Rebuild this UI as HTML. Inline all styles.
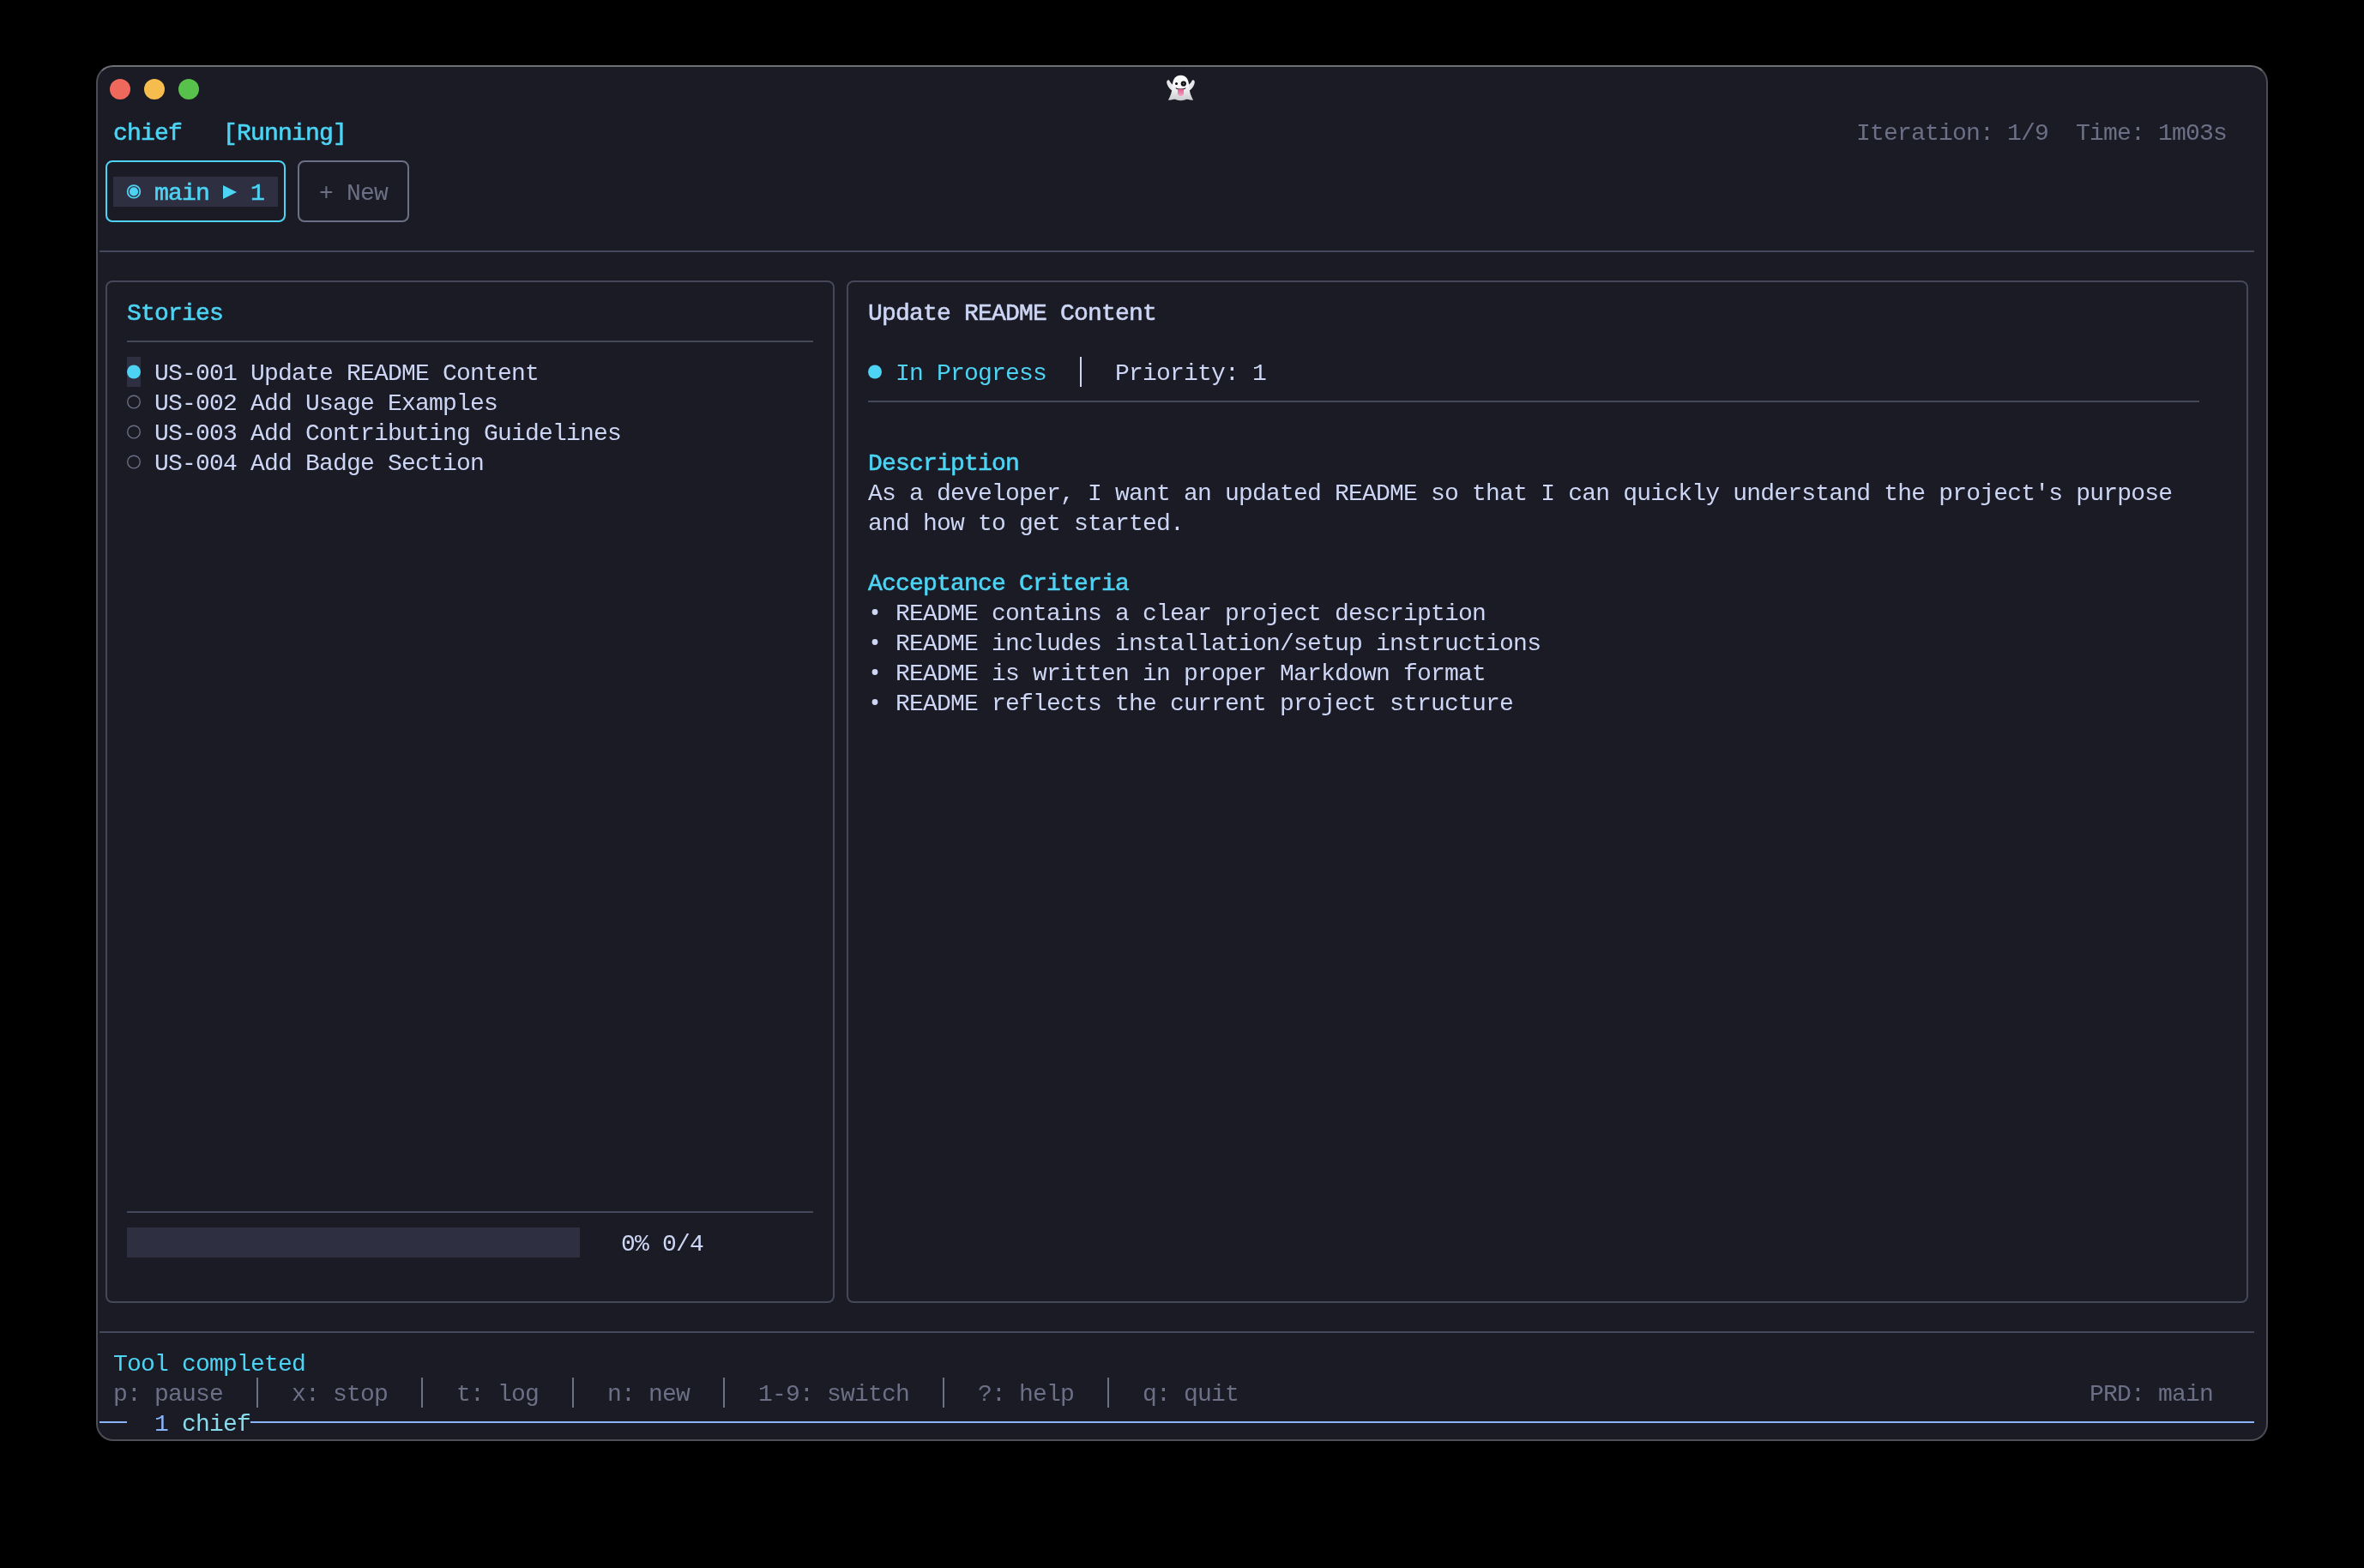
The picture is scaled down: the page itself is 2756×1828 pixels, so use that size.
<!DOCTYPE html>
<html><head><meta charset="utf-8">
<style>
html,body{margin:0;padding:0;background:#000;width:2756px;height:1828px;overflow:hidden}
.win{position:absolute;left:112px;top:76px;width:2532px;height:1604px;box-sizing:border-box;background:#1b1b25;border:2px solid #4c4c55;border-top-color:#707077;border-bottom-color:#4e4e56;border-radius:20px}
.a{position:absolute}
.t{position:absolute;white-space:pre;font-family:"Liberation Mono",monospace;font-size:28px;line-height:35px;letter-spacing:-0.800px;will-change:transform}
.tl{position:absolute;width:24.5px;height:24.5px;border-radius:50%}
svg{position:absolute;left:0;top:0}
</style></head><body>
<div class="win"></div>
<div class="tl" style="left:127.75px;top:91.75px;background:#ef685c"></div>
<div class="tl" style="left:167.75px;top:91.75px;background:#f6bc4d"></div>
<div class="tl" style="left:207.75px;top:91.75px;background:#58c14c"></div>
<div class="t" style="left:132px;top:137.8px;color:#4dd4f4;font-weight:400;-webkit-text-stroke:0.6px currentColor;">chief</div><div class="t" style="left:260px;top:137.8px;color:#4dd4f4;font-weight:400;-webkit-text-stroke:0.6px currentColor;">[Running]</div><div class="t" style="left:2164px;top:137.8px;color:#6c7086;">Iteration: 1/9  Time: 1m03s</div><div class="a" style="left:123px;top:187px;width:210px;height:72px;border:2px solid #4dd4f4;border-radius:8px;box-sizing:border-box"></div><div class="a" style="left:132px;top:206px;width:192px;height:35px;background:#2e3041;"></div><div class="t" style="left:180px;top:207.8px;color:#4dd4f4;font-weight:400;-webkit-text-stroke:0.6px currentColor;">main</div><div class="t" style="left:292px;top:207.8px;color:#4dd4f4;font-weight:400;-webkit-text-stroke:0.6px currentColor;">1</div><div class="a" style="left:347px;top:187px;width:130px;height:72px;border:2px solid #6c7086;border-radius:8px;box-sizing:border-box"></div><div class="t" style="left:372px;top:207.8px;color:#6c7086;">+</div><div class="t" style="left:404px;top:207.8px;color:#6c7086;">New</div><div class="a" style="left:116px;top:292px;width:2512px;height:2px;background:#45475a;"></div><div class="a" style="left:123px;top:327px;width:850px;height:1192px;border:2px solid #45475a;border-radius:8px;box-sizing:border-box"></div><div class="a" style="left:987px;top:327px;width:1634px;height:1192px;border:2px solid #45475a;border-radius:8px;box-sizing:border-box"></div><div class="t" style="left:148px;top:347.8px;color:#4dd4f4;font-weight:400;-webkit-text-stroke:0.6px currentColor;">Stories</div><div class="a" style="left:148px;top:397px;width:800px;height:2px;background:#45475a;"></div><div class="a" style="left:148px;top:416px;width:16px;height:35px;background:#2e3041;"></div><div class="t" style="left:180px;top:417.8px;color:#cdd6f4;">US-001 Update README Content</div><div class="t" style="left:180px;top:452.8px;color:#cdd6f4;">US-002 Add Usage Examples</div><div class="t" style="left:180px;top:487.8px;color:#cdd6f4;">US-003 Add Contributing Guidelines</div><div class="t" style="left:180px;top:522.8px;color:#cdd6f4;">US-004 Add Badge Section</div><div class="a" style="left:148px;top:1412px;width:800px;height:2px;background:#45475a;"></div><div class="a" style="left:148px;top:1431px;width:528px;height:35px;background:#2e3041;"></div><div class="t" style="left:724px;top:1432.8px;color:#cdd6f4;">0% 0/4</div><div class="t" style="left:1012px;top:347.8px;color:#cdd6f4;font-weight:400;-webkit-text-stroke:0.6px currentColor;">Update README Content</div><div class="t" style="left:1044px;top:417.8px;color:#4dd4f4;">In Progress</div><div class="a" style="left:1259px;top:416px;width:2px;height:35px;background:#cdd6f4;"></div><div class="t" style="left:1300px;top:417.8px;color:#cdd6f4;">Priority: 1</div><div class="a" style="left:1012px;top:467px;width:1552px;height:2px;background:#45475a;"></div><div class="t" style="left:1012px;top:522.8px;color:#4dd4f4;font-weight:400;-webkit-text-stroke:0.6px currentColor;">Description</div><div class="t" style="left:1012px;top:557.8px;color:#cdd6f4;">As a developer, I want an updated README so that I can quickly understand the project's purpose</div><div class="t" style="left:1012px;top:592.8px;color:#cdd6f4;">and how to get started.</div><div class="t" style="left:1012px;top:662.8px;color:#4dd4f4;font-weight:400;-webkit-text-stroke:0.6px currentColor;">Acceptance Criteria</div><div class="t" style="left:1044px;top:697.8px;color:#cdd6f4;">README contains a clear project description</div><div class="t" style="left:1044px;top:732.8px;color:#cdd6f4;">README includes installation/setup instructions</div><div class="t" style="left:1044px;top:767.8px;color:#cdd6f4;">README is written in proper Markdown format</div><div class="t" style="left:1044px;top:802.8px;color:#cdd6f4;">README reflects the current project structure</div><div class="a" style="left:116px;top:1552px;width:2512px;height:2px;background:#45475a;"></div><div class="t" style="left:132px;top:1572.8px;color:#4dd4f4;">Tool completed</div><div class="t" style="left:132px;top:1607.8px;color:#6c7086;">p: pause</div><div class="t" style="left:340px;top:1607.8px;color:#6c7086;">x: stop</div><div class="t" style="left:532px;top:1607.8px;color:#6c7086;">t: log</div><div class="t" style="left:708px;top:1607.8px;color:#6c7086;">n: new</div><div class="t" style="left:884px;top:1607.8px;color:#6c7086;">1-9: switch</div><div class="t" style="left:1140px;top:1607.8px;color:#6c7086;">?: help</div><div class="t" style="left:1332px;top:1607.8px;color:#6c7086;">q: quit</div><div class="t" style="left:2436px;top:1607.8px;color:#6c7086;">PRD: main</div><div class="a" style="left:299px;top:1606px;width:2px;height:35px;background:#6c7086;"></div><div class="a" style="left:491px;top:1606px;width:2px;height:35px;background:#6c7086;"></div><div class="a" style="left:667px;top:1606px;width:2px;height:35px;background:#6c7086;"></div><div class="a" style="left:843px;top:1606px;width:2px;height:35px;background:#6c7086;"></div><div class="a" style="left:1099px;top:1606px;width:2px;height:35px;background:#6c7086;"></div><div class="a" style="left:1291px;top:1606px;width:2px;height:35px;background:#6c7086;"></div><div class="a" style="left:116px;top:1657px;width:32px;height:2px;background:#89b4fa;"></div><div class="a" style="left:292px;top:1657px;width:2336px;height:2px;background:#89b4fa;"></div><div class="t" style="left:180px;top:1642.8px;color:#89b4fa;">1</div><div class="t" style="left:212px;top:1642.8px;color:#89dceb;">chief</div>
<svg width="2756" height="1828" viewBox="0 0 2756 1828"><circle cx="156" cy="223.4" r="7.3" fill="none" stroke="#4dd4f4" stroke-width="1.8"/><circle cx="156" cy="223.4" r="5.1" fill="#4dd4f4"/><path d="M260 216 L276 224 L260 232 Z" fill="#4dd4f4"/><circle cx="156" cy="433.5" r="8" fill="#4dd4f4"/><circle cx="156" cy="468.5" r="7.3" fill="none" stroke="#6c7086" stroke-width="1.35"/><circle cx="156" cy="503.5" r="7.3" fill="none" stroke="#6c7086" stroke-width="1.35"/><circle cx="156" cy="538.5" r="7.3" fill="none" stroke="#6c7086" stroke-width="1.35"/><circle cx="1020" cy="433.5" r="8" fill="#4dd4f4"/><circle cx="1020" cy="713.5" r="3.4" fill="#cdd6f4"/><circle cx="1020" cy="748.5" r="3.4" fill="#cdd6f4"/><circle cx="1020" cy="783.5" r="3.4" fill="#cdd6f4"/><circle cx="1020" cy="818.5" r="3.4" fill="#cdd6f4"/>
<defs><linearGradient id="gg" x1="0" y1="0" x2="0" y2="1"><stop offset="0" stop-color="#ffffff"/><stop offset="0.55" stop-color="#f0f0f3"/><stop offset="1" stop-color="#c9c9ce"/></linearGradient>
<linearGradient id="tg" x1="0" y1="0" x2="0" y2="1"><stop offset="0" stop-color="#e45a8c"/><stop offset="1" stop-color="#f0a3c6"/></linearGradient>
<filter id="gb" x="-10%" y="-10%" width="120%" height="120%"><feGaussianBlur stdDeviation="0.35"/></filter></defs>
<g filter="url(#gb)">
 <path d="M1361.8 93.3 C1360 93.8 1359.8 96 1360.8 98.5 C1362 101.5 1364 104.5 1367 106 L1367.5 99 C1366 98 1364.5 96.5 1363.8 94.8 C1363.4 93.8 1362.6 93.1 1361.8 93.3 Z" fill="#e6e6ea"/>
 <path d="M1391.2 93.3 C1393 93.8 1393.2 96 1392.2 98.5 C1391 101.5 1389 104.5 1386 106 L1385.5 99 C1387 98 1388.5 96.5 1389.2 94.8 C1389.6 93.8 1390.4 93.1 1391.2 93.3 Z" fill="#e6e6ea"/>
 <path d="M1362 116.5 C1364.5 112 1366.5 107 1366.8 100 C1367 92 1371 87.8 1376.5 87.8 C1382 87.8 1386 92 1386.2 100 C1386.5 107 1388.5 112 1391 116.5 C1388 117.2 1385.5 115.5 1383.5 115.8 C1381 116.2 1379 117.5 1376.5 117.3 C1374 117.5 1372 116.2 1369.5 115.8 C1367.5 115.5 1365 117.2 1362 116.5 Z" fill="url(#gg)"/>
 <circle cx="1371.5" cy="97.5" r="1.5" fill="#000"/>
 <circle cx="1379.8" cy="97.5" r="3.1" fill="#0a0a0a"/>
 <circle cx="1379.8" cy="97.5" r="1.2" fill="#555"/>
 <path d="M1370.5 102.3 Q1376.5 104.8 1382.5 102.3 L1382 103.5 Q1376.5 106 1371 103.5 Z" fill="#111"/>
 <path d="M1373 103.8 L1380 103.8 L1380 109 C1380 111 1378.5 112 1376.5 112 C1374.5 112 1373 111 1373 109 Z" fill="url(#tg)"/>
</g></svg>
</body></html>
